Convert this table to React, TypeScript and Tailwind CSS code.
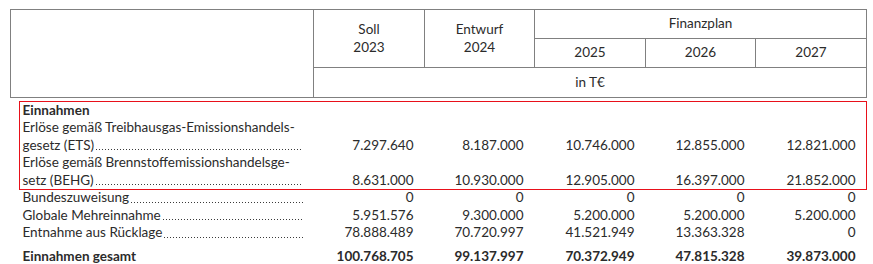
import React from 'react'

type Row = {
  lines: string[]
  values: string[]
  bold?: boolean
  leader?: boolean
}

const rows: Row[] = [
  { lines: ['Einnahmen'], values: ['', '', '', '', ''], bold: true, leader: false },
  {
    lines: ['Erlöse gemäß Treibhausgas-Emissionshandels-', 'gesetz (ETS)'],
    values: ['7.297.640', '8.187.000', '10.746.000', '12.855.000', '12.821.000'],
  },
  {
    lines: ['Erlöse gemäß Brennstoffemissionshandelsge-', 'setz (BEHG)'],
    values: ['8.631.000', '10.930.000', '12.905.000', '16.397.000', '21.852.000'],
  },
  { lines: ['Bundeszuweisung'], values: ['0', '0', '0', '0', '0'] },
  { lines: ['Globale Mehreinnahme'], values: ['5.951.576', '9.300.000', '5.200.000', '5.200.000', '5.200.000'] },
  { lines: ['Entnahme aus Rücklage'], values: ['78.888.489', '70.720.997', '41.521.949', '13.363.328', '0'] },
]

// dot leader, drawn as a background so it stays inside its cell
function Leader() {
  return (
    <span className="flex-1 ml-[1px] bg-[radial-gradient(circle,#3a3a3a_0.75px,transparent_1px)] bg-[length:3px_3px] bg-repeat-x bg-[position:0_calc(100%-3px)]" />
  )
}

function Label({ row }: { row: Row }) {
  const last = row.lines[row.lines.length - 1]
  return (
    <td className="pl-[12px] pr-[11px] align-bottom">
      {row.lines.slice(0, -1).map((l) => (
        <div key={l} className="whitespace-nowrap">{l}</div>
      ))}
      {row.leader === false ? (
        <div>{last}</div>
      ) : (
        <div className="flex whitespace-nowrap">
          <span>{last}</span>
          <Leader />
        </div>
      )}
    </td>
  )
}

export default function App() {
  const th = 'border border-[#808080] font-normal text-center'
  return (
    <div className="relative w-[873px] h-[264px] bg-white overflow-hidden text-[#2b2b2b] text-[13.5px]" style={{ fontFamily: 'Lato, "Liberation Sans", sans-serif' }}>
      <table className="ml-[10px] mt-[9px] w-[856px] border-collapse table-fixed leading-[17.5px]">
        <colgroup>
          <col className="w-[303px]" />
          <col className="w-[111px]" />
          <col className="w-[110px]" />
          <col className="w-[111px]" />
          <col className="w-[110px]" />
          <col className="w-[111px]" />
        </colgroup>
        <thead>
          <tr className="h-[29px]">
            <th rowSpan={3} className={th}></th>
            <th rowSpan={2} className={th + ' align-middle'}>
              <div>Soll</div>
              <div>2023</div>
            </th>
            <th rowSpan={2} className={th + ' align-middle'}>
              <div>Entwurf</div>
              <div>2024</div>
            </th>
            <th colSpan={3} className={th}>Finanzplan</th>
          </tr>
          <tr className="h-[29px]">
            <th className={th}>2025</th>
            <th className={th}>2026</th>
            <th className={th}>2027</th>
          </tr>
          <tr className="h-[30px]">
            <th colSpan={5} className={th}>in T€</th>
          </tr>
        </thead>
        <tbody>
          <tr className="h-[4px]"><td colSpan={6}></td></tr>
          {rows.map((r, i) => (
            <tr key={i} className={r.bold ? 'font-bold' : ''}>
              <Label row={r} />
              {r.values.map((v, j) => (
                <td key={j} className="text-right pr-[11px] align-bottom">{v}</td>
              ))}
            </tr>
          ))}
          <tr className="font-bold">
            <td className="pl-[12px] pt-[6px] align-bottom">Einnahmen gesamt</td>
            {['100.768.705', '99.137.997', '70.372.949', '47.815.328', '39.873.000'].map((v) => (
              <td key={v} className="text-right pr-[11px] pt-[6px] align-bottom">{v}</td>
            ))}
          </tr>
        </tbody>
      </table>
      <div className="absolute left-[19px] top-[101px] w-[848px] h-[89px] border-[1.5px] border-[#e8101a] pointer-events-none" />
    </div>
  )
}
